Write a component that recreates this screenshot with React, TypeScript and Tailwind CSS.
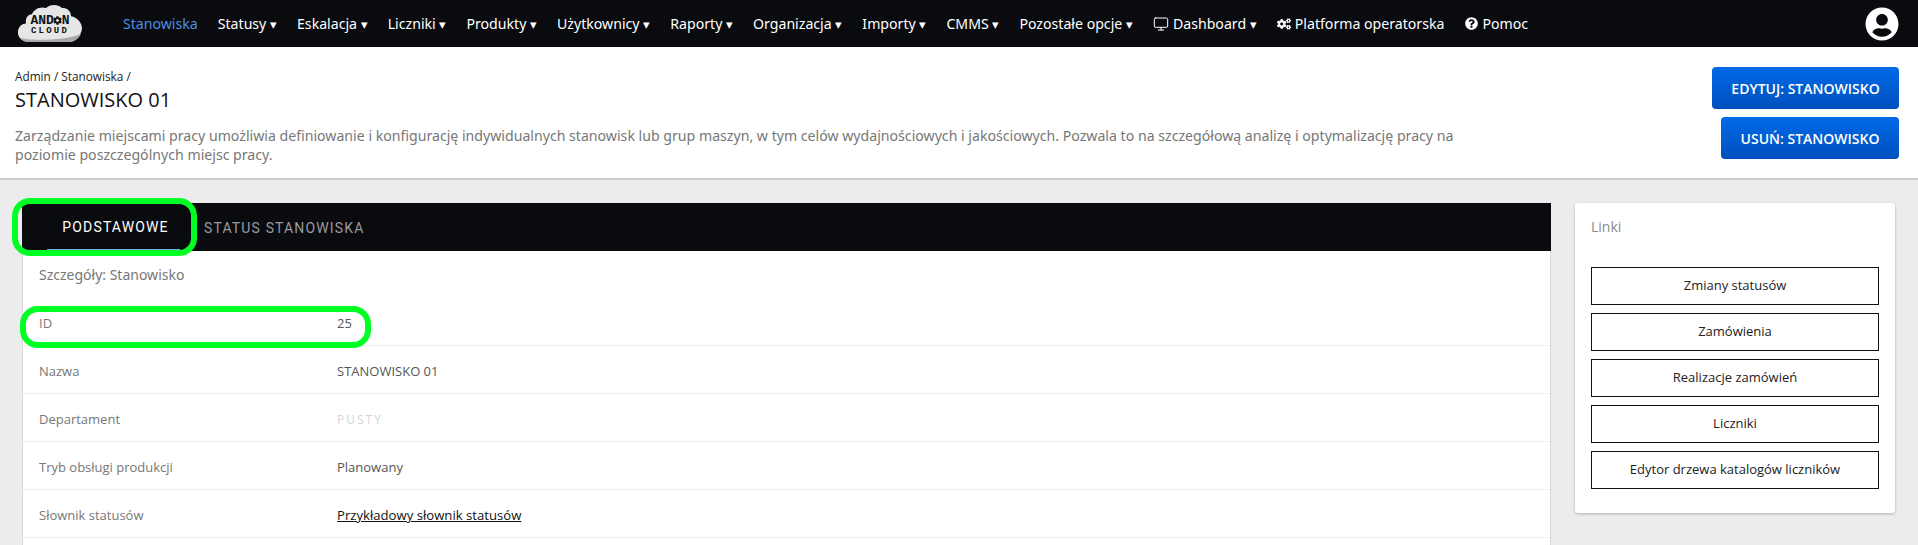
import React from 'react';
import { Monitor } from 'lucide-react';
import { FaCog, FaCogs, FaQuestionCircle, FaUserCircle } from 'react-icons/fa';

const NAV_ITEMS = ['Statusy', 'Eskalacja', 'Liczniki', 'Produkty', 'Użytkownicy', 'Raporty', 'Organizacja', 'Importy', 'CMMS', 'Pozostałe opcje'];

const ROWS = [
  { label: 'ID', value: '25' },
  { label: 'Nazwa', value: 'STANOWISKO 01' },
  { label: 'Departament', value: 'PUSTY', empty: true },
  { label: 'Tryb obsługi produkcji', value: 'Planowany' },
  { label: 'Słownik statusów', value: 'Przykładowy słownik statusów', link: true },
  { label: '', value: '' },
];

const LINKS = ['Zmiany statusów', 'Zamówienia', 'Realizacje zamówień', 'Liczniki', 'Edytor drzewa katalogów liczników'];

function Logo() {
  return (
    <div className="relative h-[39px] w-[66px] shrink-0">
      <svg viewBox="0 0 66 38" preserveAspectRatio="none" className="absolute inset-0 h-full w-full">
        {/* cloud */}
        <path
          d="M12,37 C5,37 0,32 1,26 C2,22 5,19 9,19 C8,14 11,10 15,10 C17,5 23,2 29,4 C33,0 41,0 45,4 C50,3 54,7 54,12 C60,13 65,18 65,24 C64,31 58,37 52,37Z"
          fill="#e6e6e6"
        />
        <path d="M12,37 C8,37 5,35 3,33 C10,36 50,36 64,29 C62,34 57,37 52,37Z" fill="#a8a8a8" />
      </svg>
      <div className="absolute inset-0 flex flex-col items-center justify-center font-['Liberation_Mono',monospace] font-bold leading-none text-[#111]">
        <span className="mt-[3px] flex items-center text-[13px] leading-[12px]">
          AND
          <FaCog size={9} className="mx-[-0.5px]" />
          N
        </span>
        <span className="text-[9px] leading-[9px] tracking-[2.2px]">CLOUD</span>
      </div>
    </div>
  );
}

function NavBar() {
  return (
    <nav className="flex h-[47px] items-center gap-[20px] bg-[#0a0b0f] pl-[17px] pr-[19px] font-['Noto_Sans',sans-serif] text-[14.13px] text-white">
      <div className="mr-[20px]">
        <Logo />
      </div>
      <a className="shrink-0 text-[#4a90e2]">Stanowiska</a>
      {NAV_ITEMS.map((label) => (
        <a key={label} className="shrink-0 whitespace-nowrap">
          {label} <span className="text-[13px]">▾</span>
        </a>
      ))}
      <a className="flex shrink-0 items-center gap-[4px]">
        <Monitor size={16} strokeWidth={1.5} />
        <span className="whitespace-nowrap">
          Dashboard <span className="text-[13px]">▾</span>
        </span>
      </a>
      <a className="flex items-center gap-[4px] whitespace-nowrap">
        <FaCogs size={14} />
        Platforma operatorska
      </a>
      <a className="ml-[1px] flex items-center gap-[4px]">
        <FaQuestionCircle size={13} />
        Pomoc
      </a>
      <FaUserCircle size={34} className="ml-auto" />
    </nav>
  );
}

function PageHeader() {
  return (
    <header className="flex h-[133px] justify-between border-b-2 border-[#cccccc] bg-white pl-[15px] pr-[19px]">
      <div className="w-[1450px] pt-[21px]">
        <div className="text-[11.8px] leading-[16px] text-[#222]">Admin / Stanowiska /</div>
        <h1 className="mt-[2px] text-[20px] leading-[27px] text-[#111]">STANOWISKO 01</h1>
        <p className="mt-[13px] font-['Noto_Sans',sans-serif] text-[14.13px] leading-[19px] text-[#777]">
          Zarządzanie miejscami pracy umożliwia definiowanie i konfigurację indywidualnych stanowisk lub grup maszyn, w tym celów wydajnościowych i jakościowych. Pozwala to na szczegółową analizę i optymalizację pracy na poziomie poszczególnych miejsc pracy.
        </p>
      </div>
      <div className="flex flex-col items-end gap-[8px] pt-[20px]">
        <button className="h-[42px] w-[187px] rounded-[4px] bg-gradient-to-b from-[#006ae8] to-[#0050bd] text-[14px] font-semibold text-white">
          EDYTUJ: STANOWISKO
        </button>
        <button className="h-[42px] w-[178px] rounded-[4px] bg-gradient-to-b from-[#006ae8] to-[#0050bd] text-[14px] font-semibold text-white">
          USUŃ: STANOWISKO
        </button>
      </div>
    </header>
  );
}

function DetailsPanel() {
  return (
    <section className="w-[1529px] shrink-0">
      {/* tabs */}
      <div className="flex h-[48px] items-end bg-[#0a0b0f] pl-[25px] font-['Roboto',sans-serif] text-[14px] tracking-[1.15px]">
        <div className="flex h-[47px] w-[133px] items-center justify-center border-b-2 border-[#7aa9e0] pl-[4px] pt-[1px] text-white">PODSTAWOWE</div>
        <div className="ml-[24px] flex h-[47px] items-center pt-[1px] text-[#9a9a9f]">STATUS STANOWISKA</div>
      </div>
      <div className="border-x border-[#d8d8d8] bg-white">
        <div className="h-[47px] pl-[16px] pt-[14px] font-['Noto_Sans',sans-serif] text-[14px] leading-[20px] text-[#777]">Szczegóły: Stanowisko</div>
        {ROWS.map((row, i) => (
          <div key={i} className="flex h-[48px] items-center border-b border-[#eeeeee] pt-[5px] text-[13px]">
            <div className="w-[314px] pl-[16px] text-[#777]">{row.label}</div>
            {row.link ? (
              <a className="text-[13.15px] text-[#111] underline">{row.value}</a>
            ) : row.empty ? (
              <span className="text-[12px] tracking-[2px] text-[#d4d4d4]">{row.value}</span>
            ) : (
              <span className="text-[#555]">{row.value}</span>
            )}
          </div>
        ))}
      </div>
    </section>
  );
}

function LinksPanel() {
  return (
    <aside className="h-[310px] w-[320px] shrink-0 rounded-[3px] bg-white px-[16px] pt-[14px] shadow-[0_1px_3px_rgba(0,0,0,0.25)]">
      <div className="text-[14px] leading-[20px] text-[#8a8a8a]">Linki</div>
      <div className="mt-[30px] flex flex-col gap-[8px]">
        {LINKS.map((link) => (
          <a key={link} className="flex h-[38px] items-center justify-center border border-[#111] text-[13px] text-[#222]">
            {link}
          </a>
        ))}
      </div>
    </aside>
  );
}

export default function App() {
  return (
    <div className="relative h-[545px] overflow-hidden bg-[#ececec] font-['Open_Sans','Noto_Sans',sans-serif]">
      <NavBar />
      <PageHeader />
      <main className="flex gap-[24px] pl-[22px] pt-[23px]">
        <DetailsPanel />
        <LinksPanel />
      </main>
      {/* green annotations drawn on top of the screenshot */}
      <div className="absolute left-[12px] top-[198px] h-[58px] w-[185px] rounded-[18px] border-[6px] border-[#00ff22]" />
      <div className="absolute left-[20px] top-[306px] h-[42px] w-[351px] rounded-[18px] border-[6px] border-[#00ff22]" />
    </div>
  );
}
